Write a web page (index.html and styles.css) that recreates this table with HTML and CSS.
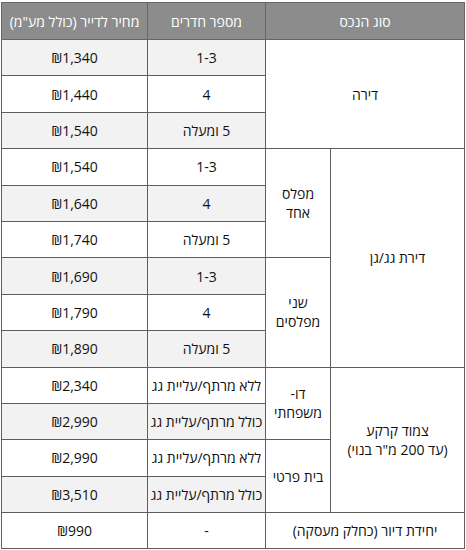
FILE: index.html
```html
<!DOCTYPE html>
<html lang="he" dir="rtl">
<head>
<meta charset="utf-8">
<link rel="stylesheet" href="styles.css">
</head>
<body>
<table class="prices">
  <colgroup>
    <col class="c-type">
    <col class="c-sub">
    <col class="c-rooms">
    <col class="c-price">
  </colgroup>
  <thead>
    <tr>
      <th colspan="2">סוג הנכס</th>
      <th>מספר חדרים</th>
      <th>מחיר לדייר (כולל מע"מ)</th>
    </tr>
  </thead>
  <tbody>
    <tr class="odd">
      <td class="span" colspan="2" rowspan="3">דירה</td>
      <td>1-3</td>
      <td>₪1,340</td>
    </tr>
    <tr>
      <td>4</td>
      <td>₪1,440</td>
    </tr>
    <tr class="odd">
      <td>5 ומעלה</td>
      <td>₪1,540</td>
    </tr>
    <tr>
      <td class="span" rowspan="6">דירת גג/גן</td>
      <td class="span" rowspan="3">מפלס<br>אחד</td>
      <td>1-3</td>
      <td>₪1,540</td>
    </tr>
    <tr class="odd">
      <td>4</td>
      <td>₪1,640</td>
    </tr>
    <tr>
      <td>5 ומעלה</td>
      <td>₪1,740</td>
    </tr>
    <tr class="odd">
      <td class="span" rowspan="3">שני<br>מפלסים</td>
      <td>1-3</td>
      <td>₪1,690</td>
    </tr>
    <tr>
      <td>4</td>
      <td>₪1,790</td>
    </tr>
    <tr class="odd">
      <td>5 ומעלה</td>
      <td>₪1,890</td>
    </tr>
    <tr>
      <td class="span" rowspan="4">צמוד קרקע<br>(עד 200 מ"ר בנוי)</td>
      <td class="span" rowspan="2">דו-<br>משפחתי</td>
      <td>ללא מרתף/עליית גג</td>
      <td>₪2,340</td>
    </tr>
    <tr class="odd">
      <td>כולל מרתף/עליית גג</td>
      <td>₪2,990</td>
    </tr>
    <tr>
      <td class="span" rowspan="2">בית פרטי</td>
      <td>ללא מרתף/עליית גג</td>
      <td>₪2,990</td>
    </tr>
    <tr class="odd">
      <td>כולל מרתף/עליית גג</td>
      <td>₪3,510</td>
    </tr>
    <tr>
      <td class="span" colspan="2">יחידת דיור (כחלק מעסקה)</td>
      <td>-</td>
      <td>₪990</td>
    </tr>
  </tbody>
</table>
</body>
</html>
```
FILE: styles.css
```css
html, body {
  margin: 0;
  padding: 0;
  background: #ffffff;
}
body {
  padding: 2px 1px 0 2px;
}
.prices {
  width: 463px;
  border-collapse: collapse;
  table-layout: fixed;
  font-family: "Open Sans", "Liberation Sans", sans-serif;
  font-size: 14px;
  color: #111111;
  border: 1px solid #8a8a8a;
}
.c-type { width: 134px; }
.c-sub { width: 65px; }
.c-rooms { width: 118px; }
.c-price { width: 146px; }
.prices th {
  height: 36px;
  background: #8c8c8c;
  color: #ffffff;
  font-weight: normal;
  border: 1px solid #666666;
  text-align: center;
  padding: 0 2px;
}
.prices tr {
  height: 36.4px;
}
.prices td {
  border: 1px solid #5e5e5e;
  text-align: center;
  vertical-align: middle;
  padding: 0 2px;
  line-height: 19px;
  background: #ffffff;
}
.prices tr.odd td {
  background: #f2f2f2;
}
.prices tr.odd td.span,
.prices td.span {
  background: #ffffff;
}
```
